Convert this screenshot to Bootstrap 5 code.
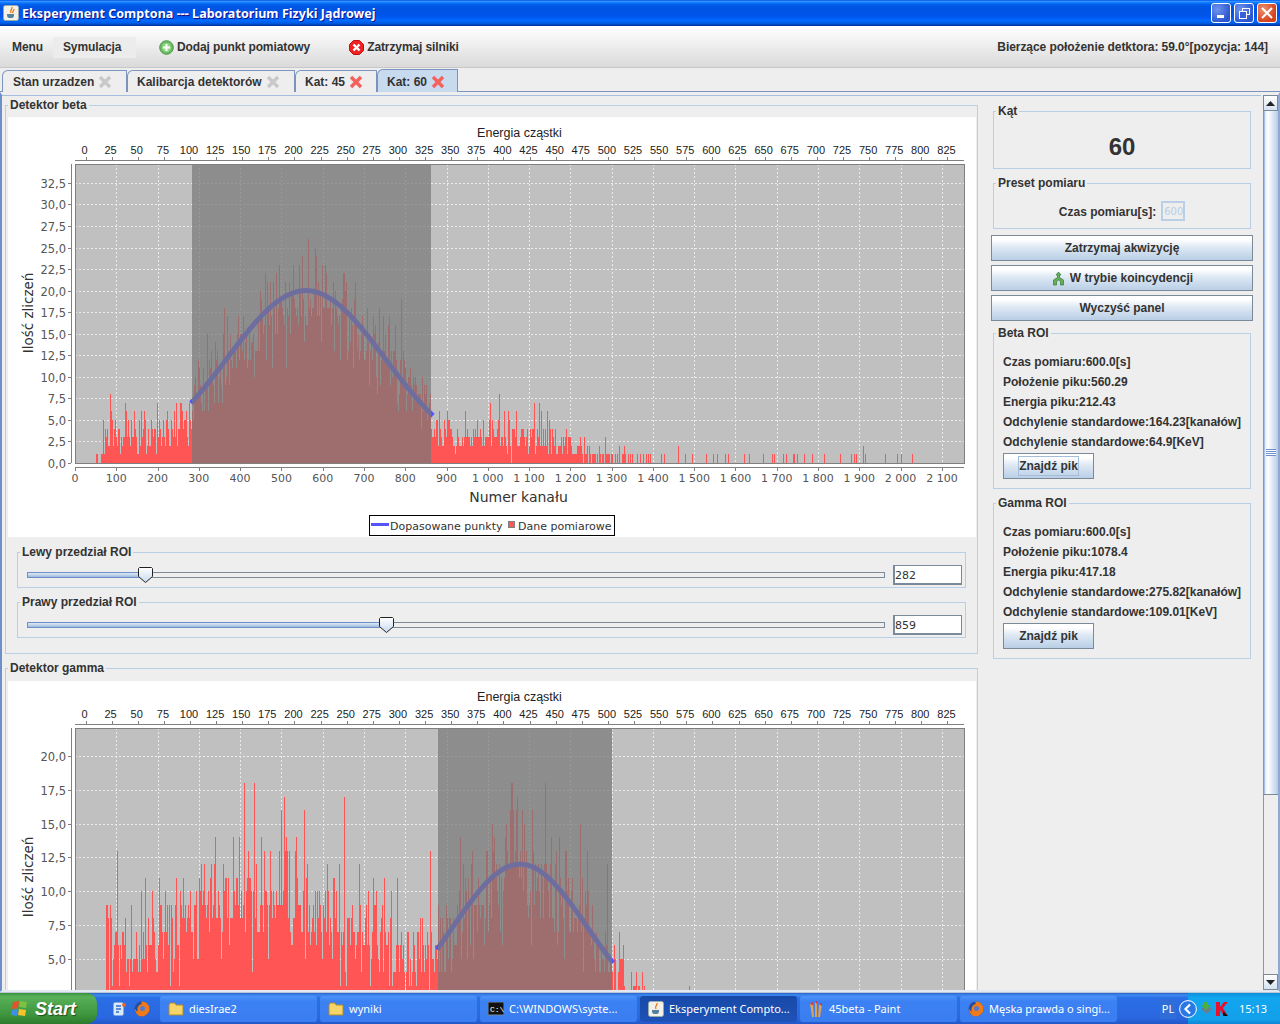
<!DOCTYPE html>
<html lang="pl">
<head>
  <meta charset="UTF-8" />
  <title>Eksperyment Comptona</title>
  <link href="https://cdn.jsdelivr.net/npm/bootstrap@5.3.0/dist/css/bootstrap.min.css" rel="stylesheet" />
  <style>
    html, body { height: 100%; overflow: hidden; }
    body { width: 1280px; height: 1024px; background: #eee; color: #333; font: bold 12px/14px "Liberation Sans", Arial, sans-serif; }
    svg text { font-weight: normal; }

    .win-title { height: 26px; padding: 0 3px 0 3px; background: linear-gradient(#0058ee 0, #3593ff 6%, #127dff 10%, #0262ee 16%, #0057e5 24%, #0054e3 35%, #0055eb 60%, #005bf5 70%, #026afe 78%, #0062ef 86%, #0052d6 92%, #003092 100%); }
    .win-title-text { color: #fff; font: bold 12.5px/16px "Noto Sans", sans-serif; letter-spacing: .05px; text-shadow: 1px 1px 0 #0f1089; margin: 1px 0 0 3px; }
    .win-btn { width: 20px; height: 20px; margin-left: 3px; border: 1px solid #fff; border-radius: 3px; background: radial-gradient(circle at 30% 30%, #6f94ee, #2a55cf 75%); display: flex; align-items: center; justify-content: center; }
    .win-btn.is-close { background: radial-gradient(circle at 30% 30%, #ee9070, #d4431c 70%); }

    .tool-bar { height: 42px; padding: 1px 12px 0; letter-spacing: -.1px; background: linear-gradient(#fff, #f4f4f4 30%, #dadada); border-bottom: 1px solid #c8c8c8; }
    .tool-item { display: flex; align-items: center; gap: 3px; margin-left: 23px; }
    .tool-item + .tool-item { margin-left: 39px; }
    .tool-sim { width: 83px; height: 21px; margin-left: 10px; padding-left: 10px; background: #ececec; display: flex; align-items: center; }
    .tool-pos { letter-spacing: -.06px; }

    .tab-strip { height: 24px; background: #eee; padding-left: 2px; border: 0; border-bottom: 1px solid #7a94bd; align-items: flex-end; flex-wrap: nowrap; }
    .tab-strip .nav-link { height: 22px; margin: 0 0 -1px 0; padding: 1px 0 0 10px; display: flex; align-items: center; gap: 4px; color: #333; background: #eee; border: 1px solid #7a94bd; border-bottom: 0; border-radius: 6px 1px 0 0; font-weight: bold; font-size: 12px; }
    .tab-strip .nav-item + .nav-item .nav-link { padding-left: 9px; }
    .tab-strip .nav-link.active { background: #c8daee; color: #333; border-color: #7a94bd; height: 23px; }
    .tab-w1 { width: 125px; }
    .tab-w2 { width: 168px; }
    .tab-w3 { width: 82px; }
    .tab-w4 { width: 81px; }

    .app-pane { height: 900px; flex: none; border-left: 2px solid #6d8fca; border-right: 2px solid #8fa9d2; border-top: 3px solid #eee; border-bottom: 2px solid #e4e9f1; box-shadow: inset 0 1px 0 #a6bddf; overflow: hidden; }
    .left-col { width: 976px; padding: 3px 0 0 3px; flex: none; }
    .right-col { width: 283px; padding: 9px 8px 0 13px; flex: none; }

    .tb-box { margin: 0; border: 1px solid #b8cfe6; min-width: 0; }
    .tb-box > legend { float: none; width: auto; margin: 0 0 0 2px; padding: 0 2px; font: bold 12px/14px "Liberation Sans", Arial, sans-serif; color: #333; }
    .det-box { padding: 5px 1px 15px 2px; }
    .det-box > legend { margin-left: 0; }
    .det-box + .det-box { margin-top: 7px; padding-top: 6px; }
    .chart-pane { background: #fff; height: 420px; }
    .chart-pane svg { display: block; }
    .roi-box { margin: 8px 10px 0 9px; padding: 6px 3px 0 9px; height: 43px; }
    .roi-box + .roi-box { margin-top: 7px; }
    .roi-box > legend { margin-left: -7px; }
    .slide-track { height: 6px; position: relative; flex: 1 1 auto; background: #eee; border: 1px solid #7a8a99; }
    .slide-fill { height: 6px; margin: -1px 0 0 -1px; background: linear-gradient(#dfe9f5, #c0d3e9 50%, #9db9dc); border: 1px solid #6d8fca; }
    .slide-thumb { position: absolute; top: -6px; width: 15px; height: 16px; margin-left: -8px; display: block; }
    .slide-value { width: 69px; height: 20px; margin-left: 8px; flex: none; padding: 2px 0 0 0; background: #fff; border: 1px solid #7a8a99; border-width: 1px 1px 2px 2px; font: normal 11px/15px "DejaVu Sans", sans-serif; color: #333; }

    .side-box { margin: 0 2px 7px; }
    .kat-box { height: 50px; padding-top: 16px; text-align: center; font: bold 24px/26px "Liberation Sans", Arial, sans-serif; }
    .preset-wrap { margin-bottom: 6px; }
    .preset-box { height: 38px; padding-top: 11px; }
    .time-input { width: 24px; height: 20px; margin-left: 5px; padding: 0 0 0 1px; border: 2px solid #b8cfe6; border-radius: 0; color: #b8cfe6; font: 10px/16px "DejaVu Sans", sans-serif; }
    .time-input:disabled { background: #eee; }
    .ocean-btn { padding: 0; height: 26px; border-radius: 0; border: 1px solid #7a8a99; background: linear-gradient(#fff, #fff 15%, #dfe9f4 45%, #b9cfe6); color: #333; font: bold 12px/14px "Liberation Sans", Arial, sans-serif; display: flex; align-items: center; justify-content: center; gap: 4px; }
    .ocean-wide { width: 262px; margin: 0 0 4px 0; }
    .ocean-small { width: 91px; margin-top: 1px; }
    .focus-text { outline: 1px solid #a3bddb; padding: 2px 0; }
    .info-first { margin-top: 5px; }
    .info-lines { padding: 12px 0 9px 9px; }
    .info-line { height: 20px; line-height: 20px; white-space: nowrap; }

    .pane-scroll { width: 17px; flex: none; height: 100%; border-left: 2px solid #eee; }
    .scroll-end { height: 16px; background: linear-gradient(#fff, #d5e2f0); border: 1px solid #7a8a99; display: flex; align-items: center; justify-content: center; flex: none; }
    .scroll-thumb { height: 684px; flex: none; background: linear-gradient(90deg, #7799d4 0, #7799d4 1px, #dfe9f5 2px, #fff 5px, #d4e2f1 11px, #b5cbe4 15px); border-bottom: 1px solid #7a8a99; display: flex; align-items: center; justify-content: center; }
    .scroll-grip { width: 10px; height: 7px; background: repeating-linear-gradient(#6d8fca 0, #6d8fca 1px, #fff 1px, #fff 2px); }
    .scroll-rest { flex: 1 1 auto; background: #eee; border-left: 1px solid #7799d4; }

    .task-bar { height: 32px; background: linear-gradient(#2a5ec9 0, #3d8bef 2px, #2a6ee6 5px, #2a67e0 80%, #2258c8 100%); border-top: 1px solid #b9c6d6; color: #fff; font: normal 11px/14px "Noto Sans", sans-serif; flex: none; }
    .start-btn { width: 97px; height: 31px; padding-left: 10px; gap: 5px; background: linear-gradient(#3c8f3c, #58b158 12%, #3d963d 70%, #2c7a2c); border-radius: 0 10px 10px 0; color: #fff; font: italic bold 18px/22px "Liberation Sans", Arial, sans-serif; text-shadow: 1px 1px 1px #1d4d1d; }
    .quick-launch { width: 63px; padding-left: 14px; gap: 7px; }
    .task-btn { width: 157px; height: 26px; margin-right: 3px; padding-left: 8px; gap: 5px; background: linear-gradient(#4d93f7, #3c81f3 20%, #3a7df0); border-radius: 3px; white-space: nowrap; overflow: hidden; }
    .task-btn.is-on { background: linear-gradient(#174aa8, #1e52b7); }
    .lang-tag { width: 16px; margin-left: 40px; height: 20px; background: #2f6ed6; display: flex; align-items: center; justify-content: center; }
    .tray-zone { margin-left: 3px; flex: 1 1 auto; height: 31px; gap: 2px; background: linear-gradient(#0c8fdd, #12a6ee 15%, #12a0ea 85%, #0c86d6) no-repeat 9px 0; }
    .tray-clock { margin-left: 8px; }
  </style>
</head>
<body class="d-flex flex-column">

  <!-- pasek tytulu -->
  <div class="win-title d-flex align-items-center flex-none">
    <svg width="16" height="16" viewBox="0 0 16 16"><rect x=".5" y=".5" width="15" height="15" rx="2" fill="#f3f0e8" stroke="#9aa"/><path d="M9 2c1 2-3 3-1 6M11 4c0 2-2 2-1 4" stroke="#e76f00" fill="none" stroke-width="1.2"/><path d="M4 9h7v1c0 2-1 3-2 3H6c-1 0-2-1-2-3z" fill="#5382a1"/></svg>
    <span class="win-title-text">Eksperyment Comptona --- Laboratorium Fizyki Jądrowej</span>
    <div class="ms-auto d-flex">
      <div class="win-btn"><svg width="12" height="12"><rect x="2" y="8" width="7" height="3" fill="#fff"/></svg></div>
      <div class="win-btn"><svg width="13" height="13" fill="none" stroke="#fff"><rect x="4.5" y="1.5" width="7" height="6"/><rect x="1.5" y="4.5" width="7" height="7" fill="#3a62d8"/></svg></div>
      <div class="win-btn is-close"><svg width="12" height="12" stroke="#fff" stroke-width="2"><path d="M1 1l10 10M11 1L1 11"/></svg></div>
    </div>
  </div>

  <!-- pasek narzedzi -->
  <div class="tool-bar d-flex align-items-center">
    <span>Menu</span>
    <span class="tool-sim">Symulacja</span>
    <span class="tool-item">
      <svg width="15" height="15" viewBox="0 0 15 15"><circle cx="7.5" cy="7.5" r="6.8" fill="#6dbb63" stroke="#4a9a45"/><circle cx="7.5" cy="7.5" r="4.6" fill="#8fd485"/><path d="M7.5 4v7M4 7.5h7" stroke="#fff" stroke-width="2"/></svg>
      Dodaj punkt pomiatowy
    </span>
    <span class="tool-item">
      <svg width="15" height="15" viewBox="0 0 15 15"><path d="M4.5.5h6l4 4v6l-4 4h-6l-4-4v-6z" fill="#ee2222" stroke="#c41010"/><path d="M4.5 4.5l6 6M10.5 4.5l-6 6" stroke="#fff" stroke-width="2.4"/></svg>
      Zatrzymaj silniki
    </span>
    <span class="ms-auto tool-pos">Bierzące położenie detktora: 59.0°[pozycja: 144]</span>
  </div>

  <!-- zakladki -->
  <ul class="nav nav-tabs tab-strip">
    <li class="nav-item"><a class="nav-link tab-w1">Stan urzadzen <svg class="x-mark" data-c="#c9c9c9" width="14" height="14"></svg></a></li>
    <li class="nav-item"><a class="nav-link tab-w2">Kalibarcja detektorów <svg class="x-mark" data-c="#c9c9c9" width="14" height="14"></svg></a></li>
    <li class="nav-item"><a class="nav-link tab-w3">Kat: 45 <svg class="x-mark" data-c="#f4605c" width="14" height="14"></svg></a></li>
    <li class="nav-item"><a class="nav-link tab-w4 active">Kat: 60 <svg class="x-mark" data-c="#f4605c" width="14" height="14"></svg></a></li>
  </ul>

  <div class="app-pane d-flex">
    <div class="left-col">
      <fieldset class="tb-box det-box">
        <legend>Detektor beta</legend>
        <div class="chart-pane"><svg id="chartBeta" width="968" height="420" viewBox="8 117 968 420"></svg></div>
        <fieldset class="tb-box roi-box">
          <legend>Lewy przedział ROI</legend>
          <div class="d-flex align-items-center">
            <div class="slide-track" data-val="282"></div>
            <div class="slide-value">282</div>
          </div>
        </fieldset>
        <fieldset class="tb-box roi-box">
          <legend>Prawy przedział ROI</legend>
          <div class="d-flex align-items-center">
            <div class="slide-track" data-val="859"></div>
            <div class="slide-value">859</div>
          </div>
        </fieldset>
      </fieldset>

      <fieldset class="tb-box det-box">
        <legend>Detektor gamma</legend>
        <div class="chart-pane"><svg id="chartGamma" width="968" height="420" viewBox="8 681 968 420"></svg></div>
      </fieldset>
    </div>

    <div class="right-col">
      <fieldset class="tb-box side-box">
        <legend>Kąt</legend>
        <div class="kat-box">60</div>
      </fieldset>
      <fieldset class="tb-box side-box preset-wrap">
        <legend>Preset pomiaru</legend>
        <div class="preset-box d-flex justify-content-center align-items-start">
          <span class="mt-1">Czas pomiaru[s]:</span>
          <input class="form-control time-input" value="600" disabled />
        </div>
      </fieldset>
      <button class="btn ocean-btn ocean-wide">Zatrzymaj akwizycję</button>
      <button class="btn ocean-btn ocean-wide">
        <svg width="15" height="15" viewBox="0 0 15 15"><path d="M7.5 1L5 4h1.5v2.5L2.5 9v5h3v-3.5L7.5 9l2 1.5V14h3V9L8.5 6.5V4H10z" fill="#69ad5b" stroke="#2f7a2f" stroke-width=".7"/></svg>
        W trybie koincydencji
      </button>
      <button class="btn ocean-btn ocean-wide mb-0">Wyczyść panel</button>

      <fieldset class="tb-box side-box info-first">
        <legend>Beta ROI</legend>
        <div class="info-lines">
          <div class="info-line">Czas pomiaru:600.0[s]</div>
          <div class="info-line">Położenie piku:560.29</div>
          <div class="info-line">Energia piku:212.43</div>
          <div class="info-line">Odchylenie standardowe:164.23[kanałów]</div>
          <div class="info-line">Odchylenie standardowe:64.9[KeV]</div>
          <button class="btn ocean-btn ocean-small"><span class="focus-text">Znajdź pik</span></button>
        </div>
      </fieldset>
      <fieldset class="tb-box side-box">
        <legend>Gamma ROI</legend>
        <div class="info-lines">
          <div class="info-line">Czas pomiaru:600.0[s]</div>
          <div class="info-line">Położenie piku:1078.4</div>
          <div class="info-line">Energia piku:417.18</div>
          <div class="info-line">Odchylenie standardowe:275.82[kanałów]</div>
          <div class="info-line">Odchylenie standardowe:109.01[KeV]</div>
          <button class="btn ocean-btn ocean-small">Znajdź pik</button>
        </div>
      </fieldset>
    </div>

    <div class="pane-scroll d-flex flex-column">
      <div class="scroll-end"><svg width="9" height="5"><path d="M4.5 0L9 5H0z" fill="#222"/></svg></div>
      <div class="scroll-thumb"><div class="scroll-grip"></div></div>
      <div class="scroll-rest"></div>
      <div class="scroll-end"><svg width="9" height="5"><path d="M0 0h9L4.5 5z" fill="#222"/></svg></div>
    </div>
  </div>

  <!-- pasek zadan -->
  <div class="task-bar d-flex align-items-center mt-auto">
    <div class="start-btn d-flex align-items-center">
      <svg width="20" height="20" viewBox="0 0 20 20"><path d="M3 3l6-1-1 7-6 1z" fill="#e8502a"/><path d="M10 2l7 1-1 6-7-1z" fill="#7cc142"/><path d="M2 11l6-1-1 7-6-1z" fill="#3f8ee8"/><path d="M9 10l7 1-1 6-7-1z" fill="#f7c42d"/></svg>
      <span>Start</span>
    </div>
    <div class="quick-launch d-flex align-items-center">
      <svg width="16" height="16" viewBox="0 0 16 16"><rect x="2" y="1" width="11" height="14" rx="2" fill="#dbe8fa" stroke="#2a6fd0"/><path d="M5 5h5M5 8h5M5 11h3" stroke="#2a6fd0" stroke-width="1.4"/><circle cx="13" cy="4" r="2" fill="#e8642a"/></svg>
      <svg class="fox-mark" width="16" height="16"></svg>
    </div>
    <div class="task-btn d-flex align-items-center"><svg class="folder-mark" width="16" height="14"></svg>diesIrae2</div>
    <div class="task-btn d-flex align-items-center"><svg class="folder-mark" width="16" height="14"></svg>wyniki</div>
    <div class="task-btn d-flex align-items-center"><svg width="16" height="14"><rect width="16" height="13" fill="#111" stroke="#789"/><text x="2" y="10" fill="#fff" font-size="8" font-family="Liberation Mono">C:\</text></svg>C:\WINDOWS\syste...</div>
    <div class="task-btn is-on d-flex align-items-center"><svg width="16" height="16" viewBox="0 0 16 16"><rect x=".5" y=".5" width="15" height="15" rx="2" fill="#f3f0e8" stroke="#9aa"/><path d="M9 2c1 2-3 3-1 6" stroke="#e76f00" fill="none" stroke-width="1.2"/><path d="M4 9h7v1c0 2-1 3-2 3H6c-1 0-2-1-2-3z" fill="#5382a1"/></svg>Eksperyment Compto...</div>
    <div class="task-btn d-flex align-items-center"><svg width="16" height="18" viewBox="0 0 16 18"><path d="M4 17L2 4l3-1 1 14zM7 17V2h2v15zM10 17l1-13 3 1-2 12z" fill="#d9a05a"/><path d="M2 4l3-2v3zM7 2l2-1v3zM11 4l3-1v3z" fill="#d33"/></svg>45beta - Paint</div>
    <div class="task-btn d-flex align-items-center"><svg class="fox-mark" width="16" height="16"></svg>Męska prawda o singi...</div>
    <div class="lang-tag">PL</div>
    <div class="tray-zone d-flex align-items-center">
      <svg width="18" height="18" viewBox="0 0 18 18"><circle cx="9" cy="9" r="8.4" fill="#2a78e4" stroke="#fff"/><path d="M11 4.5L6.5 9l4.5 4.5" fill="none" stroke="#fff" stroke-width="2.2"/></svg>
      <svg width="14" height="15" viewBox="0 0 14 15"><path d="M2 8l5-3 6 3-5 5z" fill="#6a7d8c"/><path d="M5 1h4v3h3L7 9 2 4h3z" fill="#4caf3c"/></svg>
      <svg width="14" height="16" viewBox="0 0 14 16"><path d="M1 1h4v5l4-5h4L8 7l5 8H9L5 9v6H1z" fill="#e8112d"/><path d="M8 10l5 5H8z" fill="#111"/></svg>
      <span class="tray-clock">15:13</span>
    </div>
  </div>

  <script>
    // ziarno stale, zeby widma wygladaly zawsze tak samo
    let seed = 20481;
    function rnd() {
      seed = (seed * 1664525 + 1013904223) >>> 0;
      return seed / 4294967296;
    }
    function poisson(m) {
      if (m <= 0) return 0;
      const lim = Math.exp(-m);
      let k = 0, p = 1;
      do { k++; p *= rnd(); } while (p > lim);
      return k - 1;
    }
    const PX = 0.4128;
    const chX = (c) => 75 + c * PX;

    // na piksel wpada ponad jeden kanal, widac wyzszy z nich
    function spectrum(meanAt, extra) {
      const tops = {};
      for (let x = 76; x < 964; x++) {
        const m = meanAt(x) * 0.84;
        tops[x] = Math.max(poisson(m), poisson(m));
      }
      (extra || []).forEach(([x, v]) => { tops[x] = v; });
      return tops;
    }

    function buildChart(svgId, o) {
      const dy = o.top - 164;
      const yOf = (v) => o.zero - v * o.scale;
      let s = '';
      s += `<rect x="75.5" y="${o.top + .5}" width="889" height="${o.bottom - o.top}" fill="#c0c0c0"/>`;
      // siatka
      let grid = '';
      for (let c = 100; c <= 2100; c += 100) grid += `M${Math.round(chX(c)) + .5} ${o.top}V${o.bottom}`;
      o.yTicks.forEach((v) => { grid += `M75 ${Math.round(yOf(v)) + .5}H964`; });
      s += `<path d="${grid}" stroke="#ebebeb" stroke-dasharray="2 2" fill="none"/>`;
      // slupki
      let bars = '';
      Object.keys(o.tops).forEach((x) => {
        if (o.tops[x] > 0) bars += `M${x} ${Math.round(yOf(o.tops[x]))}h1V${o.bottom}h-1z`;
      });
      s += `<path d="${bars}" fill="#ff5555" shape-rendering="crispEdges"/>`;
      // dopasowana krzywa
      let pts = [];
      for (let x = o.roi[0] - 1; x <= o.roi[1] + 2; x += 2) {
        pts.push(x + ',' + yOf(o.amp * Math.exp(-Math.pow(x - o.mid, 2) / (2 * o.sigma * o.sigma))).toFixed(1));
      }
      s += `<polyline points="${pts.join(' ')}" fill="none" stroke="#5555ff" stroke-width="5"/>`;
      s += `<rect x="${o.roi[0]}" y="${o.top}" width="${o.roi[1] - o.roi[0]}" height="${o.bottom - o.top}" fill="rgb(120,120,120)" fill-opacity=".72"/>`;
      s += `<rect x="75.5" y="${o.top + .5}" width="889" height="${o.bottom - o.top}" fill="none" stroke="#808080"/>`;

      // os gorna - energia
      s += `<text x="519.5" y="${137 + dy}" font-size="12.5" fill="#222" text-anchor="middle" font-family="Liberation Sans">Energia cząstki</text>`;
      s += `<path d="M75 ${160.5 + dy}H964" stroke="#808080"/>`;
      let t = '';
      for (let e = 0; e <= 825; e += 25) {
        const x = 85.5 + e * 1.0448;
        s += `<path d="M${Math.round(x) + .5} ${157 + dy}v3" stroke="#808080"/>`;
        t += `<text x="${(x - 1).toFixed(1)}" y="${154 + dy}" text-anchor="middle">${e}</text>`;
      }
      s += `<g font-size="11" fill="#222" font-family="Liberation Sans">${t}</g>`;

      // os lewa
      s += `<path d="M71.5 ${o.top}V${o.bottom}" stroke="#808080"/>`;
      t = '';
      o.yTicks.forEach((v) => {
        const y = Math.round(yOf(v));
        s += `<path d="M68 ${y + .5}h3" stroke="#808080"/>`;
        t += `<text x="66" y="${y + 4.5}" text-anchor="end">${v.toFixed(1).replace('.', ',')}</text>`;
      });
      s += `<g font-size="11.5" fill="#555" font-family="DejaVu Sans">${t}</g>`;
      s += `<text transform="translate(33 ${o.titleY}) rotate(-90)" text-anchor="middle" font-size="13.5" fill="#333" font-family="DejaVu Sans">Ilość zliczeń</text>`;

      // os dolna
      if (o.bottomAxis) {
        s += `<path d="M75 467.5H964" stroke="#808080"/>`;
        t = '';
        for (let c = 0; c <= 2100; c += 100) {
          const x = chX(c);
          s += `<path d="M${Math.round(x) + .5} 467v4" stroke="#808080"/>`;
          const label = c >= 1000 ? String(c).replace(/(\d)(\d{3})$/, '$1 $2') : c;
          t += `<text x="${x.toFixed(1)}" y="482" text-anchor="middle">${label}</text>`;
        }
        s += `<g font-size="11" fill="#555" font-family="DejaVu Sans">${t}</g>`;
        s += `<text x="518.5" y="502" text-anchor="middle" font-size="14" fill="#333" font-family="DejaVu Sans">Numer kanału</text>`;
        s += `<rect x="369.5" y="515.5" width="245" height="20" fill="#fff" stroke="#000"/>`;
        s += `<path d="M371 524.5h18" stroke="#5555ff" stroke-width="3"/>`;
        s += `<text x="390" y="530" font-size="11" fill="#333" font-family="DejaVu Sans">Dopasowane punkty</text>`;
        s += `<rect x="508.5" y="521.5" width="6" height="6" fill="#ff5555" stroke="#808080"/>`;
        s += `<text x="518" y="530" font-size="11" fill="#333" font-family="DejaVu Sans">Dane pomiarowe</text>`;
      }
      document.getElementById(svgId).innerHTML = s;
    }

    // widmo beta
    const betaSparse = [720, 741, 762, 802, 823, 833, 856, 866, 913, 926, 968, 992, 1000, 1026, 1035, 1053, 1058, 1067, 1087, 1110, 1145, 1192, 1223, 1232, 1238, 1262, 1320, 1355, 1369, 1401]
      .map((z) => [Math.round(430 + z / 2.904), 1]);
    betaSparse.push([678, 2], [863, 2]);
    const betaTops = spectrum((x) => {
      if (x < 96) return 0;
      if (x < 103) return 0.6;
      if (x < 192) return 2.8 + (x - 103) * 0.014;
      if (x < 431) return 20 * Math.exp(-Math.pow(x - 306, 2) / (2 * 79 * 79));
      if (x < 555) return 3.6 - (x - 431) * 0.008;
      if (x < 600) return 2 - (x - 555) * 0.025;
      if (x < 668) return 0.5 - (x - 600) * 0.005;
      return 0;
    }, betaSparse);
    buildChart('chartBeta', {
      top: 164, bottom: 463, zero: 463, scale: 8.62, roi: [192, 431], mid: 306, sigma: 79, amp: 20, titleY: 313,
      yTicks: [0, 2.5, 5, 7.5, 10, 12.5, 15, 17.5, 20, 22.5, 25, 27.5, 30, 32.5],
      tops: betaTops, bottomAxis: true
    });

    // widmo gamma
    const gammaTops = spectrum((x) => {
      if (x < 106) return 0;
      if (x < 438) return 5.4 + 4.6 * Math.exp(-Math.pow(x - 252, 2) / (2 * 62 * 62));
      if (x < 612) return 12 * Math.exp(-Math.pow(x - 520, 2) / (2 * 68 * 68));
      if (x < 645) return 3.4 - (x - 612) * 0.05;
      return 0;
    }, [[689, 3]]);
    buildChart('chartGamma', {
      top: 728, bottom: 1090, zero: 1026.6, scale: 13.53, roi: [438, 612], mid: 520, sigma: 68, amp: 12, titleY: 877,
      yTicks: [5, 7.5, 10, 12.5, 15, 17.5, 20],
      tops: gammaTops, bottomAxis: false
    });

    // suwaki ROI
    document.querySelectorAll('.slide-track').forEach((el) => {
      const pct = (el.dataset.val / 2048 * 100).toFixed(2) + '%';
      el.innerHTML = `<div class="slide-fill" style="width:${pct}"></div>` +
        `<svg class="slide-thumb" style="left:${pct}" viewBox="0 0 15 16"><defs><linearGradient id="th" x2="0" y2="1"><stop offset="0" stop-color="#fff"/><stop offset="1" stop-color="#c8daee"/></linearGradient></defs><path d="M1.5.5h12l1 1v8l-7 6-7-6v-8z" fill="url(#th)" stroke="#222"/></svg>`;
    });

    // powtarzalne ikonki
    document.querySelectorAll('.x-mark').forEach((el) => {
      el.innerHTML = `<path d="M2 2l10 10M12 2L2 12" stroke="${el.dataset.c}" stroke-width="3.4"/>`;
    });
    document.querySelectorAll('.folder-mark').forEach((el) => {
      el.innerHTML = '<path d="M1 3l1-2h5l1 2h7v10H1z" fill="#f6d469" stroke="#b08a2e"/>';
    });
    document.querySelectorAll('.fox-mark').forEach((el) => {
      el.innerHTML = '<circle cx="8" cy="8" r="7.5" fill="#2a4a9c"/><path d="M8 .5c5 0 7.5 4 7.5 7.5S12 15.5 8 15.5 1 12 .8 7.5c1 2 2 3 3 3C2.500 7 5 3 8 3c-1-1-1-2 0-2.500z" fill="#ee7a1c"/><circle cx="8.500" cy="7.500" r="2.500" fill="#5a7ac8"/>';
    });
  </script>

</body>
</html>
